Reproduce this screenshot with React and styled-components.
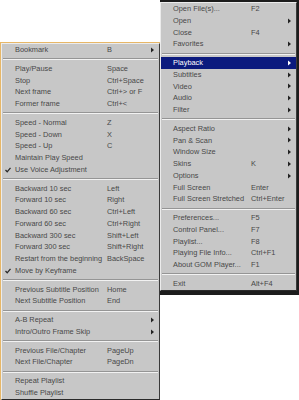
import React from "react";
import styled, { createGlobalStyle } from "styled-components";

const GlobalStyle = createGlobalStyle`
    html, body {
        margin: 0;
        padding: 0;
        background: #ffffff;
    }
    body {
        font-family: "Liberation Sans", Arial, sans-serif;
    }
`

const Page = styled.div`
    display: flex;
    align-items: flex-start;
    width: 299px;
    height: 400px;
    overflow: hidden;
    background: #ffffff;
`

const LeftColumn = styled.div`
    margin-top: 42px;
    border-top: 1px solid #e7b768;
    border-left: 1px solid #e7b768;
`

const BackWindow = styled.div`
    background: #1c1c1c;
    border-top: 1px solid #1c1c1c;
    padding: 1px 2px 4px 0;
`

const MenuBox = styled.div`
    width: ${p => p.$width}px;
    box-sizing: border-box;
    background: #c7c7c7;
    border-top: 1px solid #ececec;
    border-left: 1px solid #ececec;
    border-right: 1px solid #3a3a3a;
    border-bottom: 1px solid #2a2a2a;
    font-family: "Liberation Sans", Arial, sans-serif;
    font-size: 7.4px;
    color: #474747;
`

const Row = styled.div`
    display: grid;
    grid-template-columns: ${p => p.$indent}px ${p => p.$label}px 1fr 9px;
    align-items: center;
    height: 11.75px;
    line-height: 11.75px;
    white-space: nowrap;
    background: ${p => (p.$active ? "#0b1a7e" : "transparent")};
    color: ${p => (p.$active ? "#ffffff" : "inherit")};
`

const CheckCell = styled.div`
    display: flex;
    align-items: center;
    padding-left: 3px;
`

const Label = styled.span`
    overflow: visible;
`

const Shortcut = styled.span``

const ArrowCell = styled.div`
    display: flex;
    align-items: center;
    padding-left: 1px;
`

const Separator = styled.div`
    height: 7px;
    display: flex;
    flex-direction: column;
    justify-content: center;

    &::before {
        content: "";
        display: block;
        height: 1px;
        margin: 0 1px;
        background: #959595;
    }
    &::after {
        content: "";
        display: block;
        height: 1px;
        margin: 0 1px;
        background: #f2f2f2;
    }
`

const Check = () => (
    <svg width="6" height="6" viewBox="0 0 6 6">
        <path d="M0.5 3 L2.2 4.8 L5.5 0.8" fill="none" stroke="#2a2a2a" strokeWidth="1.3" />
    </svg>
)

const Arrow = ({ color }) => (
    <svg width="4" height="6" viewBox="0 0 4 6">
        <polygon points="0,0.5 3,3 0,5.5" fill={color} />
    </svg>
)

const playbackMenu = [
    { label: "Bookmark", key: "B", sub: true },
    "sep",
    { label: "Play/Pause", key: "Space" },
    { label: "Stop", key: "Ctrl+Space" },
    { label: "Next frame", key: "Ctrl+> or F" },
    { label: "Former frame", key: "Ctrl+<" },
    "sep",
    { label: "Speed - Normal", key: "Z" },
    { label: "Speed - Down", key: "X" },
    { label: "Speed - Up", key: "C" },
    { label: "Maintain Play Speed" },
    { label: "Use Voice Adjustment", checked: true },
    "sep",
    { label: "Backward 10 sec", key: "Left" },
    { label: "Forward 10 sec", key: "Right" },
    { label: "Backward 60 sec", key: "Ctrl+Left" },
    { label: "Forward 60 sec", key: "Ctrl+Right" },
    { label: "Backward 300 sec", key: "Shift+Left" },
    { label: "Forward 300 sec", key: "Shift+Right" },
    { label: "Restart from the beginning", key: "BackSpace" },
    { label: "Move by Keyframe", checked: true },
    "sep",
    { label: "Previous Subtitle Position", key: "Home" },
    { label: "Next Subtitle Position", key: "End" },
    "sep",
    { label: "A-B Repeat", sub: true },
    { label: "Intro/Outro Frame Skip", sub: true },
    "sep",
    { label: "Previous File/Chapter", key: "PageUp" },
    { label: "Next File/Chapter", key: "PageDn" },
    "sep",
    { label: "Repeat Playlist" },
    { label: "Shuffle Playlist" },
]

const mainMenu = [
    { label: "Open File(s)...", key: "F2" },
    { label: "Open", sub: true },
    { label: "Close", key: "F4" },
    { label: "Favorites", sub: true },
    "sep",
    { label: "Playback", sub: true, active: true },
    { label: "Subtitles", sub: true },
    { label: "Video", sub: true },
    { label: "Audio", sub: true },
    { label: "Filter", sub: true },
    "sep",
    { label: "Aspect Ratio", sub: true },
    { label: "Pan & Scan", sub: true },
    { label: "Window Size", sub: true },
    { label: "Skins", key: "K", sub: true },
    { label: "Options", sub: true },
    { label: "Full Screen", key: "Enter" },
    { label: "Full Screen Stretched", key: "Ctrl+Enter" },
    "sep",
    { label: "Preferences...", key: "F5" },
    { label: "Control Panel...", key: "F7" },
    { label: "Playlist...", key: "F8" },
    { label: "Playing File Info...", key: "Ctrl+F1" },
    { label: "About GOM Player...", key: "F1" },
    "sep",
    { label: "Exit", key: "Alt+F4" },
]

const Menu = ({ items, width, indent, label }) => (
    <MenuBox $width={width}>
        {items.map((item, i) =>
            item === "sep" ? (
                <Separator key={i} />
            ) : (
                <Row key={i} $indent={indent} $label={label} $active={item.active}>
                    <CheckCell>{item.checked && <Check />}</CheckCell>
                    <Label>{item.label}</Label>
                    <Shortcut>{item.key}</Shortcut>
                    <ArrowCell>{item.sub && <Arrow color={item.active ? "#ffffff" : "#222222"} />}</ArrowCell>
                </Row>
            )
        )}
    </MenuBox>
)

const App = () => {
    return (
        <Page>
            <GlobalStyle />
            <LeftColumn>
                <Menu items={playbackMenu} width={159} indent={13} label={92} />
            </LeftColumn>
            <BackWindow>
                <Menu items={mainMenu} width={137} indent={12} label={78} />
            </BackWindow>
        </Page>
    )
}

export default App;
